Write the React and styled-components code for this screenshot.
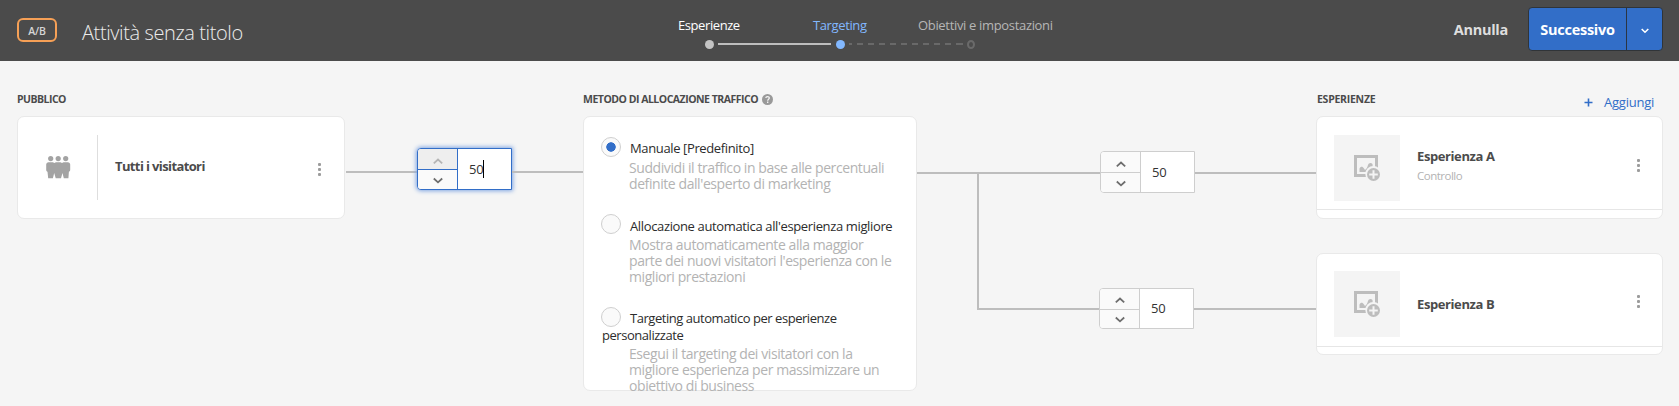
import React from "react";
import styled, { createGlobalStyle } from "styled-components";

const GlobalStyle = createGlobalStyle`
  *, *::before, *::after { box-sizing: border-box; }
  body {
    margin: 0;
    background: #f5f5f5;
    color: #4b4b4b;
    font-family: "Open Sans", "Noto Sans", sans-serif;
    font-weight: 500;
    overflow: hidden;
  }
`;

const Page = styled.div`
  width: 1679px;
  height: 406px;
  background: #f5f5f5;
`;

/* Header */

const Header = styled.header`
  display: flex;
  align-items: flex-start;
  height: 61px;
  padding: 0 16px 0 17px;
  background: #4b4b4b;
`;

const TypeBadge = styled.span`
  width: 40px;
  height: 24px;
  margin-top: 18px;
  border: 2px solid #f6a056;
  border-radius: 6px;
  color: #d6d6d6;
  font-size: 10.5px;
  font-weight: 600;
  line-height: 22px;
  letter-spacing: -0.2px;
  text-align: center;
`;

const Title = styled.h1`
  width: 596px;
  margin: 21px 0 0 25px;
  color: #ececec;
  font-size: 20px;
  font-weight: 350;
  line-height: 24px;
  letter-spacing: -0.4px;
`;

const Steps = styled.nav`
  width: 380px;
  padding-top: 16px;
`;

const StepLabels = styled.div`
  display: grid;
  grid-template-columns: 135px 105px auto;
`;

const StepLabel = styled.span`
  color: ${({ $color }) => $color};
  font-size: 13px;
  line-height: 18px;
  letter-spacing: ${({ $spacing }) => $spacing};
  white-space: nowrap;
`;

const Track = styled.div`
  display: flex;
  align-items: center;
  height: 9px;
  margin: 6px 0 0 27px;
`;

const Dot = styled.i`
  width: 9px;
  height: 9px;
  border-radius: 50%;
  background: ${({ $color }) => $color};
`;

const EmptyDot = styled.i`
  width: 8px;
  height: 9px;
  border: 2px solid #6a6a6a;
  border-radius: 50%;
`;

const TrackLine = styled.i`
  width: 113px;
  height: 2px;
  margin: 0 4.5px 1px 4px;
  background: #bebebe;
`;

const DashedLine = styled(TrackLine)`
  width: 114px;
  margin: 0 4.5px 1px 4px;
  background: repeating-linear-gradient(90deg, #696969 0 6px, transparent 6px 11px) -3px 0;
`;

const Actions = styled.div`
  display: flex;
  align-items: center;
  height: 44px;
  margin: 7px 0 0 auto;
`;

const CancelButton = styled.button`
  margin-right: 20px;
  padding: 1px 0 0;
  border: 0;
  background: none;
  color: #dedede;
  font: 700 14.5px/20px "Open Sans", sans-serif;
  letter-spacing: -0.28px;
`;

const SplitButton = styled.div`
  display: flex;
  width: 135px;
  height: 44px;
  border: 1px solid #303438;
  border-radius: 4px;
  background: #326ec8;
  overflow: hidden;
`;

const NextButton = styled.button`
  width: 98px;
  padding: 1px 0 0;
  border: 0;
  border-right: 1px solid #2b3543;
  background: none;
  color: #fff;
  font: 700 14.5px/20px "Open Sans", sans-serif;
  letter-spacing: -0.28px;
`;

const MoreButton = styled.button`
  display: flex;
  flex: 1;
  align-items: center;
  justify-content: center;
  padding: 3px 0 0;
  border: 0;
  background: none;
`;

/* Flow */

const Flow = styled.main`
  display: flex;
  padding: 30px 16px 0 17px;
`;

const Column = styled.section`
  flex: none;
  width: ${({ $width }) => $width}px;
`;

const ColumnHead = styled.div`
  display: flex;
  align-items: center;
  justify-content: space-between;
  height: 16px;
  margin-bottom: 9px;
`;

const Heading = styled.h2`
  display: flex;
  align-items: center;
  gap: 4px;
  margin: 0;
  padding-left: ${({ $indent = 0 }) => $indent}px;
  font-size: 10.5px;
  font-weight: 700;
  line-height: 16px;
  letter-spacing: ${({ $spacing }) => $spacing};
  white-space: nowrap;
`;

const AddButton = styled.button`
  display: flex;
  align-items: center;
  gap: 11px;
  margin: 6px 9px 0 0;
  padding: 0;
  border: 0;
  background: none;
  color: #326ec8;
  font: 500 13px/16px "Open Sans", sans-serif;
  letter-spacing: -0.25px;
`;

const Card = styled.article`
  height: ${({ $height }) => $height}px;
  background: #fff;
  border: 1px solid #e9e9e9;
  border-radius: 7px;
`;

const AudienceCard = styled(Card)`
  display: flex;
  align-items: center;
  padding-right: 23px;
`;

const AudienceIcon = styled.div`
  display: flex;
  align-items: center;
  width: 80px;
  height: 65px;
  padding-left: 28px;
  border-right: 1px solid #dedede;
`;

const ItemName = styled.strong`
  font-size: 13px;
  font-weight: 700;
  line-height: 18px;
  letter-spacing: ${({ $spacing = "-0.4px" }) => $spacing};
`;

const AudienceName = styled(ItemName)`
  flex: 1;
  margin: 0 0 4px 17px;
`;

const KebabMenu = styled.div`
  display: flex;
  flex-direction: column;
  align-items: center;
  gap: 2px;
  width: 4px;
  margin-top: 4px;

  &::before, &::after { content: ""; }
  &::before, &::after, & > i {
    width: 3px;
    height: 3px;
    border-radius: 1px;
    background: #9c9c9c;
  }
`;

/* Connectors */

const Connector = styled.div`
  display: flex;
  align-items: center;
  height: 42px;
`;

const AudienceConnector = styled(Connector)`
  width: 237px;
  margin: 57px 0 0 1px;
`;

const Line = styled.i`
  flex: ${({ $length }) => ($length ? `0 0 ${$length}px` : 1)};
  height: 2px;
  margin-top: ${({ $drop }) => $drop}px;
  background: #bdbdbd;
`;

const Branches = styled.div`
  width: 399px;
  padding-top: 60px;
`;

const BranchStem = styled.div`
  width: 2px;
  height: 136px;
  margin: -20px 0 -22px 60px;
  background: #bdbdbd;
`;

const SplitBranch = styled(Connector)`
  padding-left: 60px;
`;

/* Percentage stepper */

const Stepper = styled.div`
  --edge: ${({ $active }) => ($active ? "#326ec8" : "#cecece")};
  display: flex;
  flex: none;
  width: 95px;
  height: ${({ $height = 42 }) => $height}px;
  border: 1px solid var(--edge);
  border-radius: 4px 0 0 4px;
  background: #fff;
  box-shadow: ${({ $active }) => ($active ? "0 0 4px 1px #7fa5e2" : "none")};
  overflow: hidden;
`;

const StepperButtons = styled.div`
  display: grid;
  grid-template-rows: 21px 1fr;
  width: 40px;
  border-right: 1px solid var(--edge);
`;

const StepButton = styled.button`
  display: flex;
  align-items: center;
  justify-content: center;
  padding: 2px 0 0;
  border: 0;
  background: ${({ disabled }) => (disabled ? "#eeeeee" : "#fafafa")};
  color: ${({ disabled }) => (disabled ? "#b5b5b5" : "#6e6e6e")};

  &:first-child { padding-top: 4px; border-bottom: 1px solid var(--edge); }
`;

const Amount = styled.span`
  align-self: center;
  display: flex;
  align-items: center;
  padding-left: 11px;
  color: #323232;
  font-size: 13px;
  line-height: 18px;
  letter-spacing: -0.2px;
`;

const Caret = styled.i`
  width: 1px;
  height: 18px;
  background: #000;
`;

/* Allocation method */

const MethodCard = styled(Card)`
  display: flex;
  flex-direction: column;
  gap: 25.5px;
  padding: 23px 0 0 18px;
`;

const OptionLabel = styled.label`
  display: block;
  width: 296px;
  color: #2c2c2c;
  font-size: 13px;
  line-height: 17px;
  letter-spacing: ${({ $spacing }) => $spacing};
`;

const Radio = styled.span`
  display: inline-block;
  width: 20px;
  height: 20px;
  margin: -4px 9px -3.5px -1px;
  border: 1px solid #cfcfcf;
  border-radius: 50%;
  background: ${({ $checked }) =>
    $checked ? "radial-gradient(circle, #326ec8 4.4px, #fafafa 5px)" : "#fafafa"};
`;

const OptionHint = styled.p`
  margin: ${({ $gap = 2 }) => $gap}px 0 0 27px;
  color: #b3b3b3;
  font-size: 14px;
  line-height: 16px;
  letter-spacing: -0.42px;
  white-space: pre;
`;

/* Experiences */

const ExperienceCard = styled(Card)`
  display: flex;
  flex-direction: column;
  margin-bottom: 34px;
`;

const ExperienceBody = styled.div`
  display: flex;
  flex: none;
  height: ${({ $height }) => $height}px;
  padding: ${({ $top }) => $top}px 22px 0 17px;
  border-bottom: 1px solid #e6e6e6;
`;

const Thumbnail = styled.div`
  display: flex;
  align-items: center;
  justify-content: center;
  width: 66px;
  height: 66px;
  background: #f4f4f4;
`;

const ExperienceText = styled.div`
  display: flex;
  flex: 1;
  flex-direction: column;
  justify-content: center;
  height: ${({ $height }) => $height}px;
  padding-left: 17px;
`;

const ExperienceNote = styled.span`
  margin-top: 3px;
  color: #b3b3b3;
  font-size: 11.5px;
  line-height: 16px;
  letter-spacing: -0.5px;
`;

const ExperienceMenu = styled(KebabMenu)`
  height: 13px;
  margin-top: ${({ $offset }) => $offset}px;
`;

const PeopleIcon = () => (
  <svg width="25" height="23" viewBox="0 0 25 23" fill="#a3a3a3">
    <circle cx="4.700" cy="2.600" r="2.600" />
    <circle cx="12.200" cy="2.600" r="2.600" />
    <circle cx="19.700" cy="2.600" r="2.600" />
    <path d="M2.500 6.200h4.400l1.500.8 1.500-.8h4.600l1.500.8 1.500-.8h4.400c1.300 0 2.300 1 2.300 2.300v5.200c0 1-.6 1.900-1.300 2L22.400 22.300h-4.600L16.500 17 15 22.300H9.700L8.200 17 6.900 22.300H2.200L1.500 15.700c-.8-.1-1.300-1-1.300-2V8.500C.2 7.200 1.200 6.200 2.500 6.200z" />
  </svg>
);

const AddImageIcon = () => (
  <svg width="26" height="26" viewBox="0 0 26 26">
    <path d="M1.500 1.500h21v19h-21z" fill="none" stroke="#bdbdbd" strokeWidth="3" />
    <path d="M5.500 17v-3.500c1-2 3-2.500 4.500 0l1 1.500c1.500-1 2.500-3 3-5s3-3 4.500-1L19 17z" fill="#bdbdbd" />
    <circle cx="19.300" cy="19" r="8" fill="#f4f4f4" />
    <circle cx="19.500" cy="19.500" r="6.500" fill="#bdbdbd" />
    <path d="M19.500 15.200v8.600M15.200 19.500h8.600" stroke="#f4f4f4" strokeWidth="2" />
  </svg>
);

const Chevron = ({ up }) => (
  <svg width="10" height="7" viewBox="0 0 10 7" fill="none" stroke="currentColor" strokeWidth="1.800">
    <path d={up ? "M.8 5.300 5 1.500 9.200 5.300" : "M.8 1.500 5 5.300 9.200 1.500"} />
  </svg>
);

const HelpIcon = () => (
  <svg width="11" height="11" viewBox="0 0 11 11">
    <circle cx="5.500" cy="5.500" r="5.500" fill="#999" />
    <path d="M3.800 4c.2-2 3.600-1.800 3.500.1 0 1.200-1.600 1.200-1.600 2.600M5.700 7.600v1.300" fill="none" stroke="#f4f4f4" strokeWidth="1.300" />
  </svg>
);

const PlusIcon = () => (
  <svg width="9" height="9" viewBox="0 0 9 9">
    <path d="M4.500.5v8M.5 4.500h8" stroke="#326ec8" strokeWidth="1.600" />
  </svg>
);

const METHODS = [
  {
    label: "Manuale [Predefinito]",
    spacing: "-0.37px",
    hint: "Suddividi il traffico in base alle percentuali\ndefinite dall'esperto di marketing",
    hintGap: 3,
    checked: true,
  },
  {
    label: "Allocazione automatica all'esperienza migliore",
    spacing: "-0.36px",
    hint: "Mostra automaticamente alla maggior\nparte dei nuovi visitatori l'esperienza con le\nmigliori prestazioni",
  },
  {
    label: "Targeting automatico per esperienze personalizzate",
    spacing: "-0.46px",
    hint: "Esegui il targeting dei visitatori con la\nmigliore esperienza per massimizzare un\nobiettivo di business",
  },
];

function Percentage({ active, height }) {
  return (
    <Stepper $active={active} $height={height}>
      <StepperButtons>
        <StepButton disabled={active}><Chevron up /></StepButton>
        <StepButton><Chevron /></StepButton>
      </StepperButtons>
      <Amount>50{active && <Caret />}</Amount>
    </Stepper>
  );
}

function Experience({ name, note, height, bodyHeight, top, menuOffset }) {
  return (
    <ExperienceCard $height={height}>
      <ExperienceBody $height={bodyHeight} $top={top}>
        <Thumbnail><AddImageIcon /></Thumbnail>
        <ExperienceText $height={note ? 60 : 66}>
          <ItemName>{name}</ItemName>
          {note && <ExperienceNote>{note}</ExperienceNote>}
        </ExperienceText>
        <ExperienceMenu $offset={menuOffset}><i /></ExperienceMenu>
      </ExperienceBody>
    </ExperienceCard>
  );
}

export default function App() {
  return (
    <Page>
      <GlobalStyle />
      <Header>
        <TypeBadge>A/B</TypeBadge>
        <Title>Attività senza titolo</Title>
        <Steps>
          <StepLabels>
            <StepLabel $color="#ffffff" $spacing="-0.42px">Esperienze</StepLabel>
            <StepLabel $color="#82b8ff" $spacing="-0.38px">Targeting</StepLabel>
            <StepLabel $color="#b6b6b6" $spacing="-0.33px">Obiettivi e impostazioni</StepLabel>
          </StepLabels>
          <Track>
            <Dot $color="#c4c4c4" />
            <TrackLine />
            <Dot $color="#82b8ff" />
            <DashedLine />
            <EmptyDot />
          </Track>
        </Steps>
        <Actions>
          <CancelButton>Annulla</CancelButton>
          <SplitButton>
            <NextButton>Successivo</NextButton>
            <MoreButton>
              <svg width="8" height="6" viewBox="0 0 8 6" fill="none" stroke="#fff" strokeWidth="1.600">
                <path d="M.7 1 4 4.200 7.300 1" />
              </svg>
            </MoreButton>
          </SplitButton>
        </Actions>
      </Header>

      <Flow>
        <Column $width={328}>
          <ColumnHead><Heading $spacing="-0.52px">PUBBLICO</Heading></ColumnHead>
          <AudienceCard $height={103}>
            <AudienceIcon><PeopleIcon /></AudienceIcon>
            <AudienceName $spacing="-0.62px">Tutti i visitatori</AudienceName>
            <KebabMenu><i /></KebabMenu>
          </AudienceCard>
        </Column>

        <AudienceConnector>
          <Line $length={71} $drop={5} />
          <Percentage active />
          <Line $drop={5} />
        </AudienceConnector>

        <Column $width={334}>
          <ColumnHead>
            <Heading $spacing="-0.49px">METODO DI ALLOCAZIONE TRAFFICO <HelpIcon /></Heading>
          </ColumnHead>
          <MethodCard $height={275}>
            {METHODS.map((method) => (
              <div key={method.label}>
                <OptionLabel $spacing={method.spacing}>
                  <Radio $checked={method.checked} />
                  {method.label}
                </OptionLabel>
                <OptionHint $gap={method.hintGap}>{method.hint}</OptionHint>
              </div>
            ))}
          </MethodCard>
        </Column>

        <Branches>
          <Connector>
            <Line $length={183} $drop={2} />
            <Percentage />
            <Line $drop={2} />
          </Connector>
          <BranchStem />
          <SplitBranch>
            <Line $length={122} $drop={1} />
            <Percentage height={41} />
            <Line $drop={1} />
          </SplitBranch>
        </Branches>

        <Column $width={347}>
          <ColumnHead>
            <Heading $spacing="-0.26px" $indent={1}>ESPERIENZE</Heading>
            <AddButton><PlusIcon />Aggiungi</AddButton>
          </ColumnHead>
          <Experience name="Esperienza A" note="Controllo" height={103} bodyHeight={93} top={18} menuOffset={24} />
          <Experience name="Esperienza B" height={102} bodyHeight={93} top={17} menuOffset={24} />
        </Column>
      </Flow>
    </Page>
  );
}
